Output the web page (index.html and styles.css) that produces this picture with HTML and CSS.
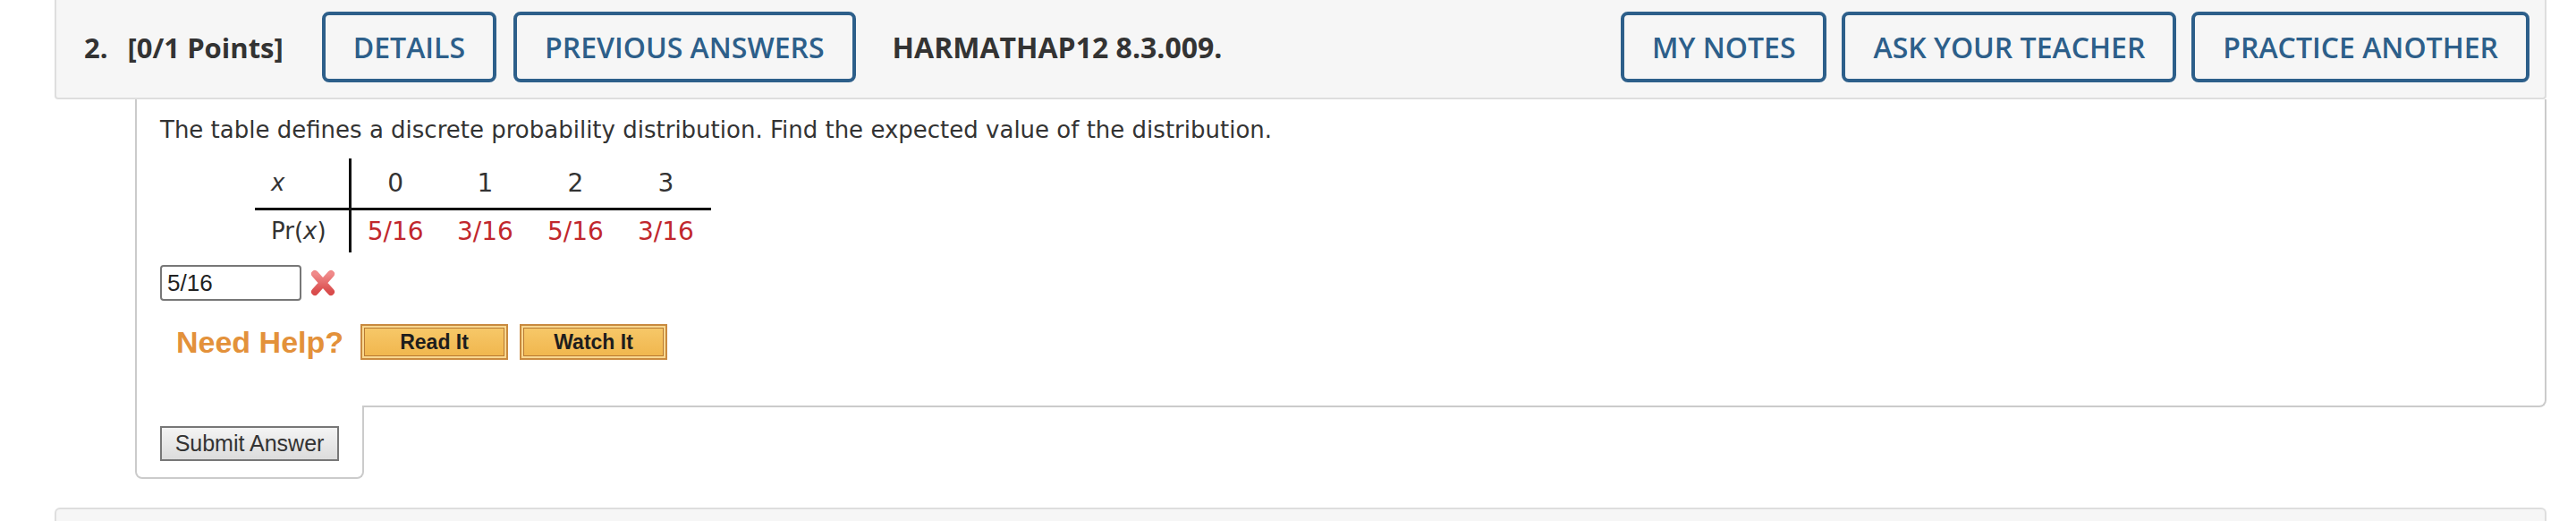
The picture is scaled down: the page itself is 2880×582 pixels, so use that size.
FILE: index.html
```html
<!DOCTYPE html>
<html lang="en">
<head>
<meta charset="utf-8">
<title>Question 2</title>
<link rel="stylesheet" href="styles.css">
</head>
<body>
<div class="page">
  <div class="qhead">
    <div class="qtitle"><span class="qnum">2.</span><span class="qpts">[0/1 Points]</span></div>
    <div class="btn">DETAILS</div>
    <div class="btn">PREVIOUS ANSWERS</div>
    <div class="qcode">HARMATHAP12 8.3.009.</div>
    <div class="right-btns">
      <div class="btn">MY NOTES</div>
      <div class="btn">ASK YOUR TEACHER</div>
      <div class="btn">PRACTICE ANOTHER</div>
    </div>
  </div>
  <div class="qbody">
    <div class="content">
      <p class="prompt">The table defines a discrete probability distribution. Find the expected value of the distribution.</p>
      <table class="dist">
        <tr class="r1"><td class="lbl"><i>x</i></td><td>0</td><td>1</td><td>2</td><td>3</td></tr>
        <tr class="r2"><td class="lbl">Pr(<i>x</i>)</td><td class="red">5/16</td><td class="red">3/16</td><td class="red">5/16</td><td class="red">3/16</td></tr>
      </table>
      <div class="answer-row">
        <div class="answer-input">5/16</div>
        <svg class="xmark" width="32" height="34" viewBox="0 0 32 34">
          <defs>
            <linearGradient id="xg" x1="0" y1="0" x2="0" y2="1">
              <stop offset="0" stop-color="#f08a8a"/>
              <stop offset="1" stop-color="#d94c4c"/>
            </linearGradient>
          </defs>
          <path d="M7 7 L25 27 M25 7 L7 27" stroke="url(#xg)" stroke-width="8" stroke-linecap="round" fill="none"/>
        </svg>
      </div>
      <div class="help-row">
        <span class="need-help">Need Help?</span>
        <span class="help-btn">Read It</span>
        <span class="help-btn">Watch It</span>
      </div>
    </div>
    <div class="submit-tab">
      <div class="submit-btn">Submit Answer</div>
    </div>
  </div>
  <div class="next-q"></div>
</div>
</body>
</html>
```
FILE: styles.css
```css
* { box-sizing: border-box; }
html, body { margin: 0; padding: 0; background: #fff; }
body { width: 2880px; height: 582px; overflow: hidden; }
.page { padding: 0 33px 0 61px; }

.qhead {
  display: flex;
  align-items: center;
  gap: 19px;
  height: 111px;
  padding: 0 17px 4px 31px;
  background: #f6f6f6;
  border: 2px solid #dedede;
  border-top: none;
  border-radius: 0 0 4px 4px;
  font-family: "Open Sans", sans-serif;
}
.qtitle {
  display: flex;
  gap: 22px;
  font-weight: 700;
  font-size: 31px;
  color: #333;
  margin-right: 24px;
}
.btn {
  height: 79px;
  display: flex;
  align-items: center;
  padding: 0 31px;
  border: 4px solid #2d5f8a;
  border-radius: 8px;
  color: #2d5f8a;
  font-size: 32px;
  font-weight: 600;
  white-space: nowrap;
}
.qcode {
  margin-left: 22px;
  font-size: 32px;
  font-weight: 700;
  color: #333;
}
.right-btns {
  margin-left: auto;
  display: flex;
  gap: 17px;
}

.qbody {
  margin-left: 90px;
}
.content {
  border: 2px solid #cbcbcb;
  border-top: none;
  border-radius: 0 0 8px 0;
  padding: 18px 26px 36px;
  height: 344px;
  font-family: "DejaVu Sans", Verdana, sans-serif;
  color: #333;
}
.prompt {
  margin: 0;
  font-size: 26px;
  line-height: 32px;
}
.dist {
  border-collapse: collapse;
  margin: 16px 0 0 106px;
  font-size: 28px;
}
.dist td {
  width: 101px;
  text-align: center;
  padding: 0;
}
.dist tr.r1 td { height: 56px; border-bottom: 3px solid #111; }
.dist tr.r2 td { height: 49px; }
.dist td.lbl {
  width: 106px;
  text-align: left;
  padding: 0 0 0 18px;
  font-size: 26px;
  border-right: 3px solid #111;
}
.dist .red { color: #c1272d; }

.answer-row {
  display: flex;
  align-items: center;
  gap: 8px;
  margin-top: 14px;
}
.answer-input {
  width: 158px;
  height: 40px;
  border: 2px solid #777;
  border-radius: 4px;
  padding: 0 6px;
  font-family: "Liberation Sans", Arial, sans-serif;
  font-size: 26px;
  line-height: 36px;
  color: #222;
}
.help-row {
  display: flex;
  align-items: center;
  gap: 13px;
  margin-top: 26px;
  padding-left: 18px;
}
.need-help {
  font-family: "Liberation Sans", Arial, sans-serif;
  font-weight: 700;
  font-size: 34px;
  color: #e3913a;
  margin-right: 6px;
}
.help-btn {
  width: 165px;
  height: 40px;
  display: flex;
  align-items: center;
  justify-content: center;
  background: linear-gradient(#f7c96a, #f0b54c);
  border: 2px solid #c98a3f;
  box-shadow: inset 0 0 0 2px #f9d890, inset 0 0 0 3px #b87a33;
  font-family: "Liberation Sans", Arial, sans-serif;
  font-weight: 700;
  font-size: 23px;
  color: #1d1d1d;
}

.submit-tab {
  width: 256px;
  height: 82px;
  margin-top: -2px;
  position: relative;
  background: #fff;
  border: 2px solid #cbcbcb;
  border-top: none;
  border-radius: 0 0 8px 8px;
  padding: 23px 0 0 26px;
}
.submit-btn {
  width: 200px;
  height: 39px;
  display: flex;
  align-items: center;
  justify-content: center;
  border: 2px solid #777;
  background: linear-gradient(#f4f4f4, #dcdcdc);
  font-family: "Liberation Sans", Arial, sans-serif;
  font-size: 25px;
  color: #333;
}

.next-q {
  margin-top: 32px;
  height: 40px;
  background: #f6f6f6;
  border: 2px solid #dedede;
  border-bottom: none;
  border-radius: 6px 6px 0 0;
}
```
